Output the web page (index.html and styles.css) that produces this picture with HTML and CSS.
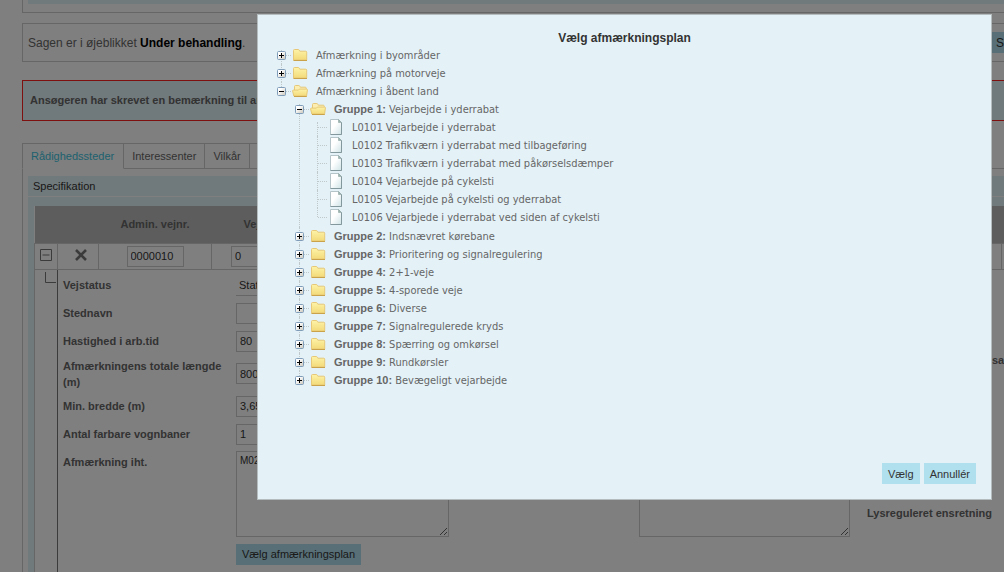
FILE: index.html
```html
<!DOCTYPE html>
<html lang="da">
<head>
  <meta charset="utf-8">
  <title>Vælg afmærkningsplan</title>
  <link rel="stylesheet" href="styles.css">
</head>
<body>
  <!-- icons used in the tree and the table -->
  <svg class="sprite" width="0" height="0">
    <defs>
      <linearGradient id="yellow" x1="0" y1="0" x2="0" y2="1">
        <stop offset="0" stop-color="#fdf3a8"/>
        <stop offset="1" stop-color="#f3da78"/>
      </linearGradient>
      <linearGradient id="paper" x1="0" y1="0" x2="1" y2="1">
        <stop offset="0.4" stop-color="#ffffff"/>
        <stop offset="1" stop-color="#cfe3e6"/>
      </linearGradient>
      <linearGradient id="box" x1="0" y1="0" x2="1" y2="1">
        <stop offset="0.3" stop-color="#ffffff"/>
        <stop offset="1" stop-color="#c9c4b8"/>
      </linearGradient>
    </defs>
    <symbol id="plus" viewBox="0 0 9 9">
      <rect x="0.5" y="0.5" width="8" height="8" rx="1" fill="url(#box)" stroke="#7f9db9"/>
      <path d="M2 4.5h5M4.5 2v5" stroke="#000" fill="none"/>
    </symbol>
    <symbol id="minus" viewBox="0 0 9 9">
      <rect x="0.5" y="0.5" width="8" height="8" rx="1" fill="url(#box)" stroke="#7f9db9"/>
      <path d="M2 4.5h5" stroke="#000" fill="none"/>
    </symbol>
    <symbol id="folder" viewBox="0 0 16 16">
      <path d="M1.5 13V3.500q0-1 1-1h3.800q.7 0 1 .7l.5 1h6q.9 0 .9 1V13z" fill="url(#yellow)" stroke="#e6c878"/>
      <path d="M1.5 13.500h13.500" stroke="#c9a24a"/>
    </symbol>
    <symbol id="folder-open" viewBox="0 0 16 16">
      <path d="M2.500 12V3.500q0-1 1-1h3.300q.7 0 1 .7l.5 1h5q.9 0 .9 1V12z" fill="#fbeeb0" stroke="#e6c878"/>
      <path d="M1.800 13 .6 8q-.1-.9.800-.9h5l1-1h7.300q.8 0 .7.900L14.600 13z" fill="url(#yellow)" stroke="#e6c878"/>
      <path d="M2 13.500h12.800" stroke="#c9a24a"/>
    </symbol>
    <symbol id="page" viewBox="0 0 16 16">
      <path d="M2.500.5h8l3 3v12h-11z" fill="url(#paper)" stroke="#b5c4c8"/>
      <path d="M13.500 3.500v12h-11" fill="none" stroke="#83989d"/>
      <path d="M10.500.5v3h3z" fill="#9db5b0" stroke="#8da5a3" stroke-width=".6"/>
    </symbol>
  </svg>

  <div class="page">
    <div class="panel panel-top"><div class="strip"></div></div>

    <div class="panel status">
      <p>Sagen er i øjeblikket <b>Under behandling</b>.</p>
      <button type="button" class="btn btn-status">Send</button>
    </div>

    <div class="alert">Ansøgeren har skrevet en bemærkning til ansøgningen</div>

    <nav class="tabs">
      <a href="#" class="tab active">Rådighedssteder</a>
      <a href="#" class="tab">Interessenter</a>
      <a href="#" class="tab">Vilkår</a>
      <a href="#" class="tab">Bilag</a>
    </nav>

    <div class="tab-body">
      <h2 class="section-title">Specifikation</h2>
      <div class="section">
        <table class="sites">
          <colgroup>
            <col class="col-toggle"><col class="col-delete"><col class="col-road"><col class="col-part"><col><col class="col-last">
          </colgroup>
          <thead>
            <tr><th></th><th></th><th>Admin. vejnr.</th><th>Vejdel</th><th></th><th></th></tr>
          </thead>
          <tbody>
            <tr class="site-row">
              <td>
                <button type="button" class="icon-btn" aria-label="Fold sammen">
                  <svg width="12" height="12" viewBox="0 0 12 12"><path d="M.5.5h11v11H.5zM2.500 6h7" fill="none" stroke="#777"/></svg>
                </button>
              </td>
              <td class="delete">
                <button type="button" class="icon-btn" aria-label="Slet">
                  <svg width="12" height="12" viewBox="0 0 12 12"><path d="M1 1l10 10M11 1L1 11" fill="none" stroke="#777" stroke-width="2.6"/></svg>
                </button>
              </td>
              <td><input type="text" class="box" aria-label="Admin. vejnr." value="0000010"></td>
              <td><input type="text" class="box" aria-label="Vejdel" value="0"></td>
              <td></td>
              <td></td>
            </tr>
            <tr class="detail-row">
              <td class="branch"><svg width="11" height="11" viewBox="0 0 11 11"><path d="M.5 0v10.500H11" fill="none" stroke="#777"/></svg></td>
              <td colspan="5" class="detail">
                <form class="fields">
                  <div class="field">
                    <label for="vejstatus">Vejstatus</label>
                    <select id="vejstatus" class="plain"><option>Statsvej</option></select>
                  </div>
                  <div class="field">
                    <label for="stednavn">Stednavn</label>
                    <input type="text" id="stednavn" class="box">
                  </div>
                  <div class="field">
                    <label for="hastighed">Hastighed i arb.tid</label>
                    <input type="text" id="hastighed" class="box" value="80">
                  </div>
                  <div class="field">
                    <label for="laengde">Afmærkningens totale længde (m)</label>
                    <input type="text" id="laengde" class="box" value="800">
                  </div>
                  <div class="field">
                    <label for="bredde">Min. bredde (m)</label>
                    <input type="text" id="bredde" class="box" value="3,65">
                  </div>
                  <div class="field">
                    <label for="vognbaner">Antal farbare vognbaner</label>
                    <input type="text" id="vognbaner" class="box" value="1">
                  </div>
                  <div class="field field-plan">
                    <label for="plan">Afmærkning iht.</label>
                    <div class="control">
                      <textarea id="plan" class="box">M02</textarea>
                      <button type="button" class="btn">Vælg afmærkningsplan</button>
                    </div>
                  </div>
                  <div class="field field-note">
                    <textarea class="box" aria-label="Bemærkning"></textarea>
                  </div>
                  <span class="side-label side-upper">samlet</span>
                  <span class="side-label side-lower">Lysreguleret ensretning</span>
                </form>
              </td>
            </tr>
          </tbody>
        </table>
      </div>
    </div>
  </div>

  <div class="overlay"></div>

  <div class="dialog" role="dialog" aria-labelledby="dialog-title">
    <h1 id="dialog-title">Vælg afmærkningsplan</h1>
    <ul class="tree">
      <li>
        <div class="node"><button type="button" class="toggle" aria-label="Fold ud"><svg><use href="#plus"/></svg></button><svg class="icon"><use href="#folder"/></svg><a href="#">Afmærkning i byområder</a></div>
      </li>
      <li>
        <div class="node"><button type="button" class="toggle" aria-label="Fold ud"><svg><use href="#plus"/></svg></button><svg class="icon"><use href="#folder"/></svg><a href="#">Afmærkning på motorveje</a></div>
      </li>
      <li>
        <div class="node"><button type="button" class="toggle" aria-label="Fold sammen"><svg><use href="#minus"/></svg></button><svg class="icon"><use href="#folder-open"/></svg><a href="#">Afmærkning i åbent land</a></div>
        <ul>
          <li>
            <div class="node"><button type="button" class="toggle" aria-label="Fold sammen"><svg><use href="#minus"/></svg></button><svg class="icon"><use href="#folder-open"/></svg><a href="#"><b>Gruppe 1:</b> Vejarbejde i yderrabat</a></div>
            <ul>
              <li><div class="node leaf"><svg class="icon"><use href="#page"/></svg><a href="#">L0101 Vejarbejde i yderrabat</a></div></li>
              <li><div class="node leaf"><svg class="icon"><use href="#page"/></svg><a href="#">L0102 Trafikværn i yderrabat med tilbageføring</a></div></li>
              <li><div class="node leaf"><svg class="icon"><use href="#page"/></svg><a href="#">L0103 Trafikværn i yderrabat med påkørselsdæmper</a></div></li>
              <li><div class="node leaf"><svg class="icon"><use href="#page"/></svg><a href="#">L0104 Vejarbejde på cykelsti</a></div></li>
              <li><div class="node leaf"><svg class="icon"><use href="#page"/></svg><a href="#">L0105 Vejarbejde på cykelsti og yderrabat</a></div></li>
              <li><div class="node leaf"><svg class="icon"><use href="#page"/></svg><a href="#">L0106 Vejarbjede i yderrabat ved siden af cykelsti</a></div></li>
            </ul>
          </li>
          <li>
            <div class="node"><button type="button" class="toggle" aria-label="Fold ud"><svg><use href="#plus"/></svg></button><svg class="icon"><use href="#folder"/></svg><a href="#"><b>Gruppe 2:</b> Indsnævret kørebane</a></div>
          </li>
          <li>
            <div class="node"><button type="button" class="toggle" aria-label="Fold ud"><svg><use href="#plus"/></svg></button><svg class="icon"><use href="#folder"/></svg><a href="#"><b>Gruppe 3:</b> Prioritering og signalregulering</a></div>
          </li>
          <li>
            <div class="node"><button type="button" class="toggle" aria-label="Fold ud"><svg><use href="#plus"/></svg></button><svg class="icon"><use href="#folder"/></svg><a href="#"><b>Gruppe 4:</b> 2+1-veje</a></div>
          </li>
          <li>
            <div class="node"><button type="button" class="toggle" aria-label="Fold ud"><svg><use href="#plus"/></svg></button><svg class="icon"><use href="#folder"/></svg><a href="#"><b>Gruppe 5:</b> 4-sporede veje</a></div>
          </li>
          <li>
            <div class="node"><button type="button" class="toggle" aria-label="Fold ud"><svg><use href="#plus"/></svg></button><svg class="icon"><use href="#folder"/></svg><a href="#"><b>Gruppe 6:</b> Diverse</a></div>
          </li>
          <li>
            <div class="node"><button type="button" class="toggle" aria-label="Fold ud"><svg><use href="#plus"/></svg></button><svg class="icon"><use href="#folder"/></svg><a href="#"><b>Gruppe 7:</b> Signalregulerede kryds</a></div>
          </li>
          <li>
            <div class="node"><button type="button" class="toggle" aria-label="Fold ud"><svg><use href="#plus"/></svg></button><svg class="icon"><use href="#folder"/></svg><a href="#"><b>Gruppe 8:</b> Spærring og omkørsel</a></div>
          </li>
          <li>
            <div class="node"><button type="button" class="toggle" aria-label="Fold ud"><svg><use href="#plus"/></svg></button><svg class="icon"><use href="#folder"/></svg><a href="#"><b>Gruppe 9:</b> Rundkørsler</a></div>
          </li>
          <li>
            <div class="node"><button type="button" class="toggle" aria-label="Fold ud"><svg><use href="#plus"/></svg></button><svg class="icon"><use href="#folder"/></svg><a href="#"><b>Gruppe 10:</b> Bevægeligt vejarbejde</a></div>
          </li>
        </ul>
      </li>
    </ul>
    <div class="dialog-buttons">
      <button type="button" class="btn">Vælg</button>
      <button type="button" class="btn">Annullér</button>
    </div>
  </div>
</body>
</html>
```

FILE: styles.css
```css
* {
  box-sizing: border-box;
}
body {
  margin: 0;
  height: 100vh;
  overflow: hidden;
  position: relative;
  background: #fff;
  color: #666;
  font-family: "Liberation Sans", Arial, sans-serif;
  font-size: 11px;
  line-height: 16px;
}
.sprite {
  position: absolute;
}
button,
input,
select,
textarea {
  font-family: inherit;
  font-size: 11px;
  color: #333;
}

/* page behind the dialog, runs out past the right edge */
.page {
  margin: 0 -57px 0 22px;
}
.panel {
  border: 1px solid #ccc;
}
.panel-top {
  border-top: none;
  padding: 0 5px 8px;
}
.strip {
  height: 4px;
  background: #e1f2f6;
}
.status {
  display: flex;
  align-items: center;
  justify-content: space-between;
  height: 39px;
  margin-top: 10px;
  padding: 0 6px 0 5px;
}
.status p {
  margin: 0;
  font-size: 12px;
}
.status b {
  color: #000;
}
.btn {
  height: 21px;
  padding: 0 6px;
  border: none;
  background: #b0dfee;
  color: #333;
  cursor: pointer;
}
.btn-status {
  width: 64px;
  font-size: 12px;
  text-align: left;
}
.alert {
  margin-top: 18px;
  padding: 11px 7px 12px;
  border: 1px solid #ff2020;
  background: #e1f2f6;
  font-weight: bold;
}

.tabs {
  display: flex;
  margin-top: 22px;
}
.tab {
  height: 26px;
  padding: 4px 8px;
  border: 1px solid #ccc;
  border-left: none;
  color: #666;
  text-decoration: none;
}
.tab.active {
  padding-right: 9px;
  border-left: 1px solid #ccc;
  border-bottom-color: #fff;
  color: #3cc4de;
}
.tabs::after {
  content: "";
  flex: 1;
  border-bottom: 1px solid #ccc;
}
.tab-body {
  border: 1px solid #ccc;
  border-top: none;
  padding: 7px 5px;
}
.section-title {
  margin: 0 0 1px;
  padding: 2px 5px;
  background: #e1f2f6;
  color: #333;
  font-size: 11px;
  font-weight: normal;
}
.section {
  padding: 9px 6px;
  background: #e1f2f6;
}

.sites {
  width: 100%;
  table-layout: fixed;
  border-collapse: collapse;
  background: #fff;
}
.col-toggle { width: 23px; }
.col-delete { width: 41px; }
.col-road { width: 113px; }
.col-part { width: 96px; }
.col-last { width: 47px; }
.sites th {
  height: 37px;
  padding: 0;
  background: #bbb;
}
.sites td {
  padding: 0;
  border: 1px solid #ccc;
}
.site-row td {
  height: 26px;
  text-align: center;
}
.sites .delete {
  padding-left: 6px;
}
.icon-btn {
  display: block;
  margin: 0 auto;
  padding: 0 0 3px;
  border: none;
  background: none;
}
.icon-btn svg {
  display: block;
}
.box {
  height: 21px;
  padding: 0 3px;
  border: 1px solid #ccc;
  background: #fff;
}
.site-row .box {
  display: block;
  width: 57px;
  margin: 0 auto;
}
.sites .branch {
  padding: 2px 0 0 10px;
  border-right-color: #777;
  vertical-align: top;
}
.branch svg {
  display: block;
}
.sites .detail {
  padding: 4px 5px 30px;
}

.fields {
  display: grid;
  grid-template-columns: 386px 384px auto;
  gap: 5px 17px;
}
.field {
  display: flex;
  align-items: center;
  min-height: 23px;
  grid-column: 1;
}
.field label {
  width: 173px;
  flex: none;
  font-weight: bold;
}
.field .box,
.field .plain {
  width: 213px;
}
.plain {
  height: 21px;
  padding: 0 3px;
  border: none;
  border-bottom: 1px solid #ccc;
  background: #fff;
  appearance: none;
}
.field textarea.box {
  display: block;
  height: 86px;
  padding: 3px;
  font-size: 10px;
}
.field-plan,
.field-note {
  align-items: flex-start;
  grid-row: 7;
}
.field-plan label {
  padding-top: 3px;
}
.field-plan .btn {
  margin-top: 7px;
}
.field-note {
  grid-column: 2;
  padding-left: 173px;
}
.side-label {
  grid-column: 3;
  align-self: center;
  font-weight: bold;
  white-space: nowrap;
}
.side-upper {
  grid-row: 3 / 5;
  padding-left: 125px;
}
.side-lower {
  grid-row: 7;
  padding-top: 10px;
}

.overlay {
  position: absolute;
  inset: 0;
  background: rgba(0, 0, 0, 0.5);
}

/* dialog */
.dialog {
  position: absolute;
  top: 14px;
  left: 257px;
  right: 12px;
  padding: 15px;
  border: 1px solid #b4bcbe;
  background: #e4f2f8;
}
.dialog h1 {
  margin: 0;
  color: #333;
  font-size: 12px;
  line-height: 16px;
  text-align: center;
}
.tree,
.tree ul {
  margin: 0;
  list-style: none;
}
.tree {
  min-height: 417px;
  padding: 0;
  font-family: "DejaVu Sans Condensed", Tahoma, sans-serif;
}
.tree ul {
  padding: 0 0 1px 18px;
}
.tree li {
  position: relative;
}
.tree li::before {
  content: "";
  position: absolute;
  top: 0;
  bottom: 0;
  left: 8px;
  border-left: 1px dotted #bfc8ca;
}
.tree li:first-child::before {
  top: 4px;
}
.tree li:last-child::before {
  bottom: auto;
  height: 9px;
}
.node {
  display: flex;
  align-items: center;
  position: relative;
  height: 18px;
}
.node::before {
  content: "";
  position: absolute;
  left: 9px;
  width: 9px;
  border-top: 1px dotted #bfc8ca;
}
.toggle {
  position: relative;
  width: 9px;
  height: 9px;
  margin: 0 5px 0 4px;
  padding: 0;
  border: none;
  background: none;
}
.toggle svg {
  display: block;
  width: 9px;
  height: 9px;
}
.icon {
  width: 16px;
  height: 16px;
  margin: 0 8px 0 1px;
}
.leaf .icon {
  margin-left: 19px;
}
.node a {
  padding-top: 1px;
  color: #666;
  text-decoration: none;
  white-space: nowrap;
}
.node b {
  font-family: "Liberation Sans", Arial, sans-serif;
}
.dialog-buttons {
  display: flex;
  justify-content: flex-end;
  gap: 4px;
}
```
